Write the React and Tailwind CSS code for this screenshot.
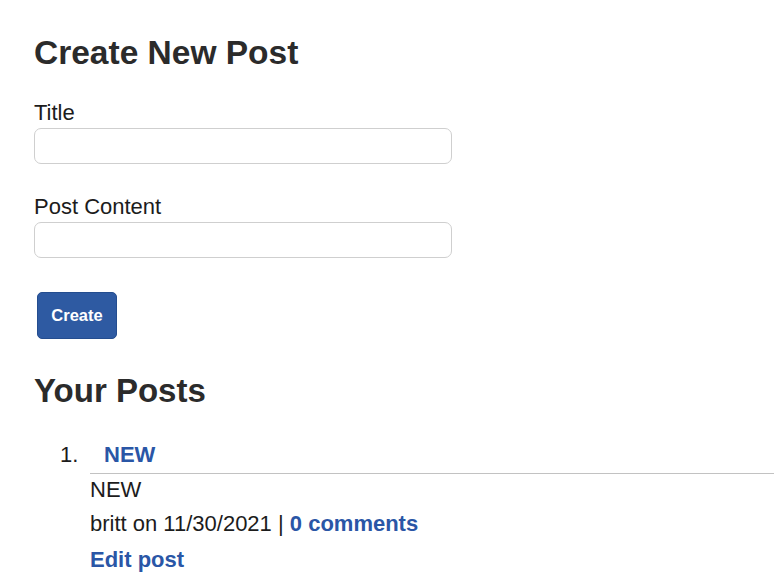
import React from 'react';

const font = { fontFamily: '"Liberation Sans", Arial, sans-serif' };

const App = () => {
    return (
        <div className="min-h-screen bg-white pl-[34px] text-[#1c1c1c]" style={font}>
            {/* create form */}
            <h1 className="pt-[33px] text-[33.5px] leading-[40px] font-bold text-[#2b2b2b]">Create New Post</h1>
            <form className="w-[418px]" onSubmit={(e) => e.preventDefault()}>
                <label className="mt-[27px] block text-[22px] leading-[26px]">Title</label>
                <input className="mt-[2px] block h-[36px] w-full rounded-[7px] border border-[#cfcfcf] bg-white" />
                <label className="mt-[30px] block text-[22px] leading-[26px]">Post Content</label>
                <input className="mt-[2px] block h-[36px] w-full rounded-[7px] border border-[#cfcfcf] bg-white" />
                <button
                    type="submit"
                    className="mt-[34px] ml-[3px] block h-[47px] w-[80px] rounded-[5px] border border-[#244d8f] bg-[#2e5aa2] text-[16.5px] font-bold text-white"
                >
                    Create
                </button>
            </form>

            {/* posts */}
            <h2 className="mt-[32px] text-[33px] leading-[40px] font-bold text-[#2b2b2b]">Your Posts</h2>
            <ol className="mt-[31px] pl-[56px] text-[22px] leading-[26px]">
                <li>
                    <div className="-ml-[30px] flex">
                        <span className="w-[44px]">1.</span>
                        <a href="#" className="font-bold text-[#2a56a6]">NEW</a>
                    </div>
                    <div className="mt-[5px] border-t border-[#c2c2c2]" />
                    <p className="mt-[3px]">NEW</p>
                    <p className="mt-[8px]">
                        britt on 11/30/2021 | <a href="#" className="font-bold text-[#2a56a6]">0 comments</a>
                    </p>
                    <a href="#" className="mt-[10px] block font-bold text-[#2a56a6]">Edit post</a>
                </li>
            </ol>
        </div>
    );
};

export default App;
